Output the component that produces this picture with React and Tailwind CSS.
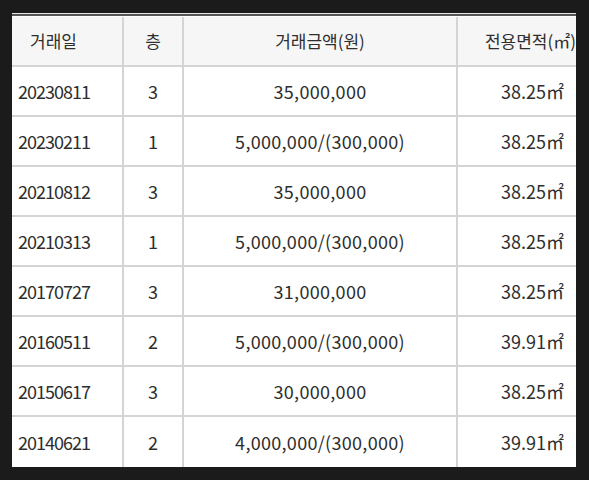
const rows = [
  ["20230811", "3", "35,000,000", "38.25㎡"],
  ["20230211", "1", "5,000,000/(300,000)", "38.25㎡"],
  ["20210812", "3", "35,000,000", "38.25㎡"],
  ["20210313", "1", "5,000,000/(300,000)", "38.25㎡"],
  ["20170727", "3", "31,000,000", "38.25㎡"],
  ["20160511", "2", "5,000,000/(300,000)", "39.91㎡"],
  ["20150617", "3", "30,000,000", "38.25㎡"],
  ["20140621", "2", "4,000,000/(300,000)", "39.91㎡"],
];

export default function App() {
  return (
    <div className="w-[589px] h-[480px] bg-[#1b1b1b] pt-[13px] pl-[12px] font-['Noto_Sans_CJK_KR',sans-serif] text-[18px] text-[#2e2e2e]">
      <div className="w-[564px] h-[454px] bg-white overflow-hidden">
        {/* double rule on top */}
        <div className="h-px bg-[#e6e6e6]" />
        <div className="h-[2px] bg-[#555]" />
        <div className="h-px bg-white" />

        <div className="grid grid-cols-[110px_60px_274px_120px] h-[50px] bg-[#f6f6f6] border-b-2 border-[#d4d4d4] text-[17px]">
          <div className="flex items-center pl-[18px]">거래일</div>
          <div className="flex items-center justify-center border-l-2 border-[#d4d4d4]">층</div>
          <div className="flex items-center justify-center border-l-2 border-[#d4d4d4]">거래금액(원)</div>
          <div className="flex items-center justify-end border-l-2 border-[#d4d4d4] whitespace-nowrap">전용면적(㎡)</div>
        </div>

        {rows.map((r, i) => (
          <div key={i} className="grid grid-cols-[110px_60px_274px_120px] h-[50px] border-b-2 border-[#d4d4d4] last:border-b-0">
            <div className="flex items-center pl-[6px] tracking-[-1px]">{r[0]}</div>
            <div className="flex items-center justify-center border-l-2 border-[#d4d4d4]">{r[1]}</div>
            <div className="flex items-center justify-center border-l-2 border-[#d4d4d4] tracking-[0.3px]">{r[2]}</div>
            <div className="flex items-center justify-end border-l-2 border-[#d4d4d4] pr-[12px]">{r[3]}</div>
          </div>
        ))}
      </div>
    </div>
  );
}
